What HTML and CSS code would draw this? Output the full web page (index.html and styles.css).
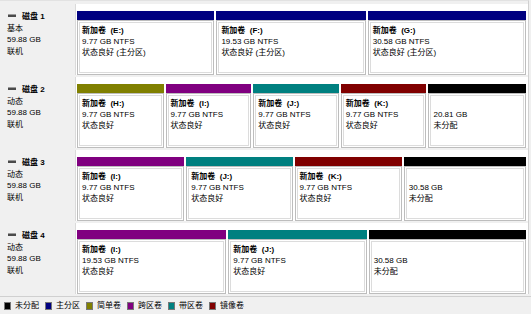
FILE: index.html
```html
<!DOCTYPE html>
<html lang="zh-CN">
<head>
  <meta charset="UTF-8">
  <title>磁盘管理</title>
  <link rel="stylesheet" href="styles.css">
</head>
<body>
  <div class="disks">
    <div class="disk">
      <div class="label">
        <div class="name"><span class="icon"></span>磁盘 1</div>
        <div>基本</div>
        <div>59.88 GB</div>
        <div>联机</div>
      </div>
      <div class="parts">
        <div class="part" style="flex-grow: 138">
          <div class="bar primary"></div>
          <div class="body"><b>新加卷&nbsp; (E:)</b><br>9.77 GB NTFS<br>状态良好 (主分区)</div>
        </div>
        <div class="part" style="flex-grow: 150">
          <div class="bar primary"></div>
          <div class="body"><b>新加卷&nbsp; (F:)</b><br>19.53 GB NTFS<br>状态良好 (主分区)</div>
        </div>
        <div class="part" style="flex-grow: 159">
          <div class="bar primary"></div>
          <div class="body"><b>新加卷&nbsp; (G:)</b><br>30.58 GB NTFS<br>状态良好 (主分区)</div>
        </div>
      </div>
    </div>

    <div class="disk">
      <div class="label">
        <div class="name"><span class="icon"></span>磁盘 2</div>
        <div>动态</div>
        <div>59.88 GB</div>
        <div>联机</div>
      </div>
      <div class="parts">
        <div class="part" style="flex-grow: 87">
          <div class="bar simple"></div>
          <div class="body"><b>新加卷&nbsp; (H:)</b><br>9.77 GB NTFS<br>状态良好</div>
        </div>
        <div class="part" style="flex-grow: 86">
          <div class="bar spanned"></div>
          <div class="body"><b>新加卷&nbsp; (I:)</b><br>9.77 GB NTFS<br>状态良好</div>
        </div>
        <div class="part" style="flex-grow: 86">
          <div class="bar striped"></div>
          <div class="body"><b>新加卷&nbsp; (J:)</b><br>9.77 GB NTFS<br>状态良好</div>
        </div>
        <div class="part" style="flex-grow: 86">
          <div class="bar mirror"></div>
          <div class="body"><b>新加卷&nbsp; (K:)</b><br>9.77 GB NTFS<br>状态良好</div>
        </div>
        <div class="part" style="flex-grow: 98">
          <div class="bar free"></div>
          <div class="body"><br>20.81 GB<br>未分配</div>
        </div>
      </div>
    </div>

    <div class="disk">
      <div class="label">
        <div class="name"><span class="icon"></span>磁盘 3</div>
        <div>动态</div>
        <div>59.88 GB</div>
        <div>联机</div>
      </div>
      <div class="parts">
        <div class="part" style="flex-grow: 108">
          <div class="bar spanned"></div>
          <div class="body"><b>新加卷&nbsp; (I:)</b><br>9.77 GB NTFS<br>状态良好</div>
        </div>
        <div class="part" style="flex-grow: 107">
          <div class="bar striped"></div>
          <div class="body"><b>新加卷&nbsp; (J:)</b><br>9.77 GB NTFS<br>状态良好</div>
        </div>
        <div class="part" style="flex-grow: 108">
          <div class="bar mirror"></div>
          <div class="body"><b>新加卷&nbsp; (K:)</b><br>9.77 GB NTFS<br>状态良好</div>
        </div>
        <div class="part" style="flex-grow: 123">
          <div class="bar free"></div>
          <div class="body"><br>30.58 GB<br>未分配</div>
        </div>
      </div>
    </div>

    <div class="disk">
      <div class="label">
        <div class="name"><span class="icon"></span>磁盘 4</div>
        <div>动态</div>
        <div>59.88 GB</div>
        <div>联机</div>
      </div>
      <div class="parts">
        <div class="part" style="flex-grow: 150">
          <div class="bar spanned"></div>
          <div class="body"><b>新加卷&nbsp; (I:)</b><br>19.53 GB NTFS<br>状态良好</div>
        </div>
        <div class="part" style="flex-grow: 139">
          <div class="bar striped"></div>
          <div class="body"><b>新加卷&nbsp; (J:)</b><br>9.77 GB NTFS<br>状态良好</div>
        </div>
        <div class="part" style="flex-grow: 158">
          <div class="bar free"></div>
          <div class="body"><br>30.58 GB<br>未分配</div>
        </div>
      </div>
    </div>
  </div>

  <div class="legend">
    <span class="key"><i class="free"></i>未分配</span>
    <span class="key"><i class="primary"></i>主分区</span>
    <span class="key"><i class="simple"></i>简单卷</span>
    <span class="key"><i class="spanned"></i>跨区卷</span>
    <span class="key"><i class="striped"></i>带区卷</span>
    <span class="key"><i class="mirror"></i>镜像卷</span>
  </div>
</body>
</html>
```

FILE: styles.css
```css
* {
  box-sizing: border-box;
}
body {
  margin: 0;
  width: 531px;
  height: 314px;
  overflow: hidden;
  background: #f0f0f0;
  color: #000;
  font-family: "Liberation Sans", "Noto Sans CJK SC", sans-serif;
  font-size: 8px;
  line-height: 11px;
}
.disks {
  display: flex;
  flex-direction: column;
  gap: 2px;
  width: 529px;
  padding-top: 3px;
  border-top: 1px solid #e2e2e2;
  border-right: 1px solid #d0d0d0;
}
.disk {
  display: flex;
  height: 71px;
}
.label {
  width: 76px;
  padding: 7px 0 0 7px;
  background: #f0f0f0;
  border-right: 1px solid #dadada;
  line-height: 11.6px;
}
.name {
  font-weight: bold;
}
.icon {
  display: inline-block;
  width: 8px;
  height: 3px;
  margin: 0 6px 2px 1px;
  vertical-align: middle;
  background: #4a4a4a;
  border-top: 1px solid #9a9a9a;
}
.parts {
  flex: 1;
  display: flex;
  gap: 2px;
  padding: 7px 2px 0 1px;
  background: #fff;
}
.part {
  flex: 1 1 0;
  min-width: 0;
  display: flex;
  flex-direction: column;
}
.bar {
  height: 9px;
}
.body {
  flex: 1;
  padding: 4px 0 0 4px;
  border: 1px solid #bdbdbd;
  box-shadow: inset 0 0 0 1px #fff, inset 0 0 0 2px #dcdcdc;
  white-space: nowrap;
  overflow: hidden;
}
.primary { background: #000080; }
.simple { background: #808000; }
.spanned { background: #800080; }
.striped { background: #008080; }
.mirror { background: #800000; }
.free { background: #000; }

.legend {
  display: flex;
  align-items: center;
  gap: 6px;
  height: 18px;
  margin-top: 2px;
  padding-left: 4px;
  border-top: 1px solid #d0d0d0;
}
.key {
  display: flex;
  align-items: center;
  gap: 4px;
}
.key i {
  width: 7px;
  height: 8px;
  border: 1px solid #777;
}
```
